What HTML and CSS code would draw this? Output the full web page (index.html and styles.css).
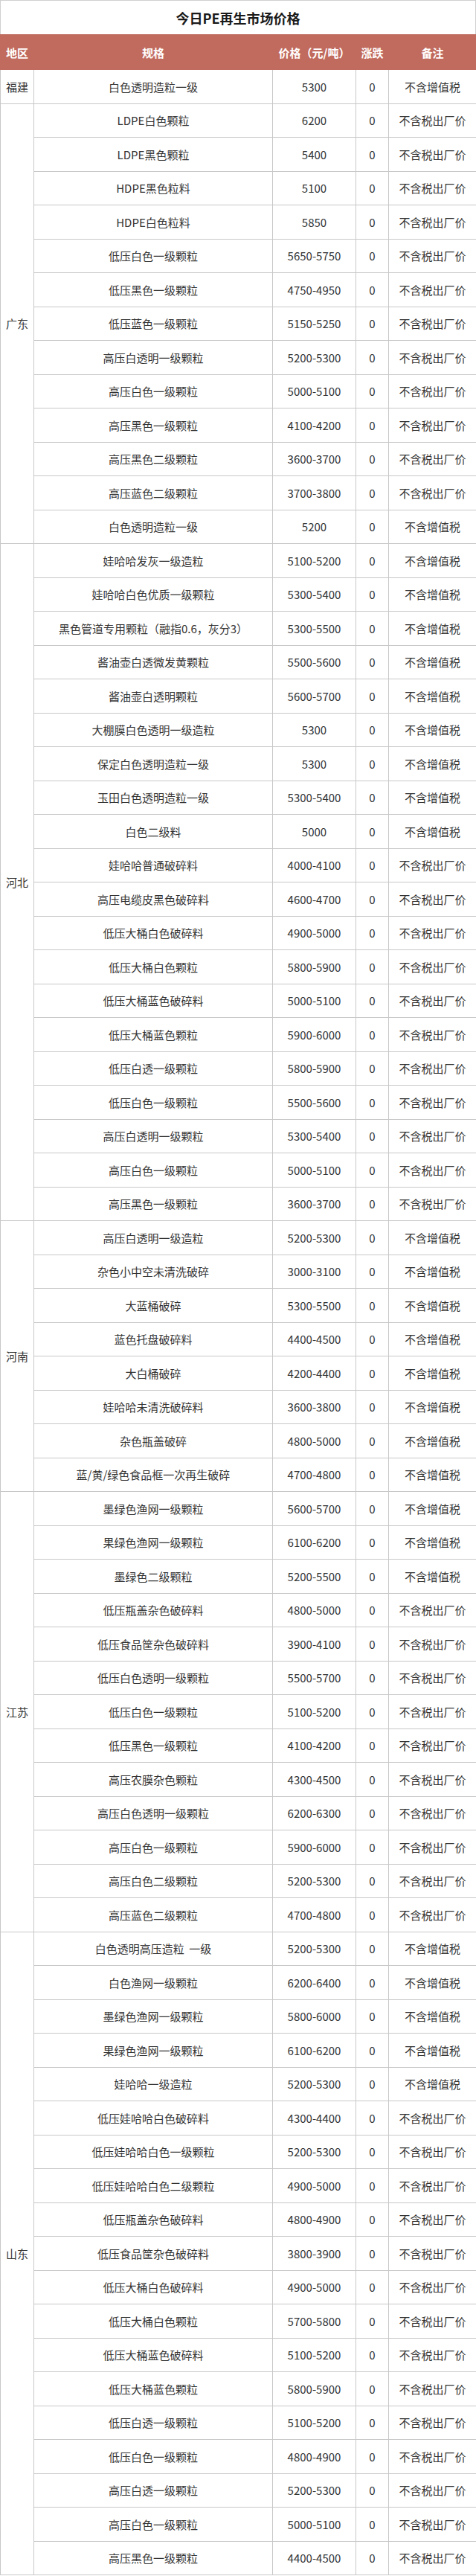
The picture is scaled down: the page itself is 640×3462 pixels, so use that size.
FILE: index.html
```html
<!DOCTYPE html>
<html lang="zh-CN">
<head>
<meta charset="utf-8">
<title>今日PE再生市场价格</title>
<link rel="stylesheet" href="styles.css">
</head>
<body>
<div class="sheet">
  <div class="title">今日PE再生市场价格</div>
  <table class="price-table">
    <colgroup>
      <col class="c-region"><col class="c-spec"><col class="c-price"><col class="c-chg"><col class="c-note">
    </colgroup>
    <thead>
      <tr><th>地区</th><th>规格</th><th>价格（元/吨）</th><th>涨跌</th><th>备注</th></tr>
    </thead>
    <tbody id="body"></tbody>
  </table>
</div>
<script src="app.js"></script>
</body>
</html>
```
FILE: app.js
```js
var A = "不含增值税", B = "不含税出厂价";
var groups = [
  ["福建", [["白色透明造粒一级","5300",A]]],
  ["广东", [
    ["LDPE白色颗粒","6200",B],["LDPE黑色颗粒","5400",B],["HDPE黑色粒料","5100",B],["HDPE白色粒料","5850",B],
    ["低压白色一级颗粒","5650-5750",B],["低压黑色一级颗粒","4750-4950",B],["低压蓝色一级颗粒","5150-5250",B],
    ["高压白透明一级颗粒","5200-5300",B],["高压白色一级颗粒","5000-5100",B],["高压黑色一级颗粒","4100-4200",B],
    ["高压黑色二级颗粒","3600-3700",B],["高压蓝色二级颗粒","3700-3800",B],["白色透明造粒一级","5200",A]]],
  ["河北", [
    ["娃哈哈发灰一级造粒","5100-5200",A],["娃哈哈白色优质一级颗粒","5300-5400",A],
    ["黑色管道专用颗粒（融指0.6，灰分3）","5300-5500",A],["酱油壶白透微发黄颗粒","5500-5600",A],
    ["酱油壶白透明颗粒","5600-5700",A],["大棚膜白色透明一级造粒","5300",A],["保定白色透明造粒一级","5300",A],
    ["玉田白色透明造粒一级","5300-5400",A],["白色二级料","5000",A],["娃哈哈普通破碎料","4000-4100",B],
    ["高压电缆皮黑色破碎料","4600-4700",B],["低压大桶白色破碎料","4900-5000",B],["低压大桶白色颗粒","5800-5900",B],
    ["低压大桶蓝色破碎料","5000-5100",B],["低压大桶蓝色颗粒","5900-6000",B],["低压白透一级颗粒","5800-5900",B],
    ["低压白色一级颗粒","5500-5600",B],["高压白透明一级颗粒","5300-5400",B],["高压白色一级颗粒","5000-5100",B],
    ["高压黑色一级颗粒","3600-3700",B]]],
  ["河南", [
    ["高压白透明一级造粒","5200-5300",A],["杂色小中空未清洗破碎","3000-3100",A],["大蓝桶破碎","5300-5500",A],
    ["蓝色托盘破碎料","4400-4500",A],["大白桶破碎","4200-4400",A],["娃哈哈未清洗破碎料","3600-3800",A],
    ["杂色瓶盖破碎","4800-5000",A],["蓝/黄/绿色食品框一次再生破碎","4700-4800",A]]],
  ["江苏", [
    ["墨绿色渔网一级颗粒","5600-5700",A],["果绿色渔网一级颗粒","6100-6200",A],["墨绿色二级颗粒","5200-5500",A],
    ["低压瓶盖杂色破碎料","4800-5000",B],["低压食品筐杂色破碎料","3900-4100",B],["低压白色透明一级颗粒","5500-5700",B],
    ["低压白色一级颗粒","5100-5200",B],["低压黑色一级颗粒","4100-4200",B],["高压农膜杂色颗粒","4300-4500",B],
    ["高压白色透明一级颗粒","6200-6300",B],["高压白色一级颗粒","5900-6000",B],["高压白色二级颗粒","5200-5300",B],
    ["高压蓝色二级颗粒","4700-4800",B]]],
  ["山东", [
    ["白色透明高压造粒\u00a0\u00a0一级","5200-5300",A],["白色渔网一级颗粒","6200-6400",A],["墨绿色渔网一级颗粒","5800-6000",A],
    ["果绿色渔网一级颗粒","6100-6200",A],["娃哈哈一级造粒","5200-5300",A],["低压娃哈哈白色破碎料","4300-4400",B],
    ["低压娃哈哈白色一级颗粒","5200-5300",B],["低压娃哈哈白色二级颗粒","4900-5000",B],["低压瓶盖杂色破碎料","4800-4900",B],
    ["低压食品筐杂色破碎料","3800-3900",B],["低压大桶白色破碎料","4900-5000",B],["低压大桶白色颗粒","5700-5800",B],
    ["低压大桶蓝色破碎料","5100-5200",B],["低压大桶蓝色颗粒","5800-5900",B],["低压白透一级颗粒","5100-5200",B],
    ["低压白色一级颗粒","4800-4900",B],["高压白透一级颗粒","5200-5300",B],["高压白色一级颗粒","5000-5100",B],
    ["高压黑色一级颗粒","4400-4500",B]]]
];
var body = document.getElementById("body");
var html = "";
groups.forEach(function (g) {
  g[1].forEach(function (r, i) {
    html += "<tr>";
    if (i === 0) html += '<td class="region" rowspan="' + g[1].length + '">' + g[0] + "</td>";
    html += '<td class="spec">' + r[0] + '</td><td class="price">' + r[1] + '</td><td class="chg">0</td><td class="note">' + r[2] + "</td></tr>";
  });
});
body.innerHTML = html;
```
FILE: styles.css
```css
html, body {
  margin: 0;
  padding: 0;
  background: #ffffff;
}
body {
  font-family: "Noto Sans CJK SC", "Noto Sans", sans-serif;
  color: #333333;
}
.sheet {
  width: 640px;
}
.title {
  height: 46px;
  box-sizing: border-box;
  border: 1px solid #d0d0d0;
  border-bottom: none;
  display: flex;
  align-items: center;
  justify-content: center;
  font-size: 18px;
  font-weight: 700;
  color: #1a1a1a;
}
.price-table {
  width: 640px;
  border-collapse: collapse;
  table-layout: fixed;
}
.c-region { width: 45px; }
.c-spec { width: 321px; }
.c-price { width: 112px; }
.c-chg { width: 44px; }
.c-note { width: 118px; }
.price-table th {
  height: 46px;
  padding: 0;
  background: #c16a5e;
  color: #ffffff;
  font-size: 15px;
  font-weight: 700;
  text-align: center;
  border: 1px solid #c16a5e;
}
.price-table td {
  height: 44.5px;
  padding: 0;
  border: 1px solid #c8c8c8;
  text-align: center;
  vertical-align: middle;
  font-size: 15px;
  white-space: nowrap;
}
```
